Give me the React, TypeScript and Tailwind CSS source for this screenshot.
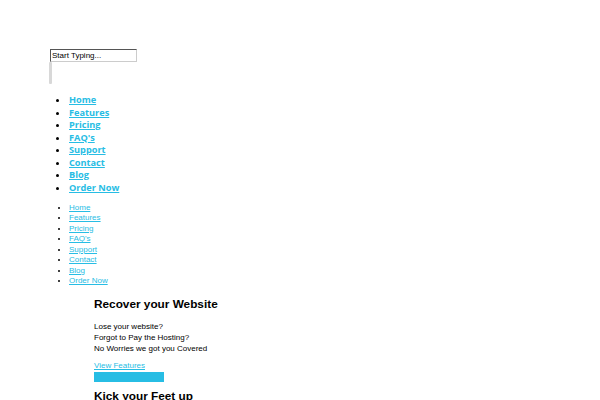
import React from "react";

const bold = ["Home", "Features", "Pricing", "FAQ's", "Support", "Contact", "Blog", "Order Now"];

export default function App() {
  return (
    <div className="min-h-[400px] w-[600px] bg-white pt-[49px] pl-[49px] overflow-hidden" style={{ fontFamily: '"Liberation Sans", Arial, sans-serif' }}>
      <input
        readOnly
        value="Start Typing..."
        className="block ml-[1px] w-[87px] h-[13px] px-[1px] text-[8px] leading-[11px] text-black border border-t-[#555] border-l-[#555] border-r-[#ccc] border-b-[#ccc] outline-none bg-white"
      />
      <div className="w-[3px] h-[22px] bg-[#d8d8d8] rounded-[1px]" />
      <ul
        className="mt-[10px] ml-[13px] pl-[7px] list-disc text-[9.2px] leading-[12.57px] font-bold"
        style={{ fontFamily: '"Open Sans", sans-serif' }}
      >
        {bold.map((t) => (
          <li key={t}>
            <a href="#" className="text-[#27bde4] underline">{t}</a>
          </li>
        ))}
      </ul>
      <ul className="mt-[8px] ml-[13px] pl-[7px] list-disc text-[8px] leading-[10.57px]">
        {bold.map((t) => (
          <li key={t}>
            <a href="#" className="text-[#27bde4] underline">{t}</a>
          </li>
        ))}
      </ul>
      <div className="ml-[45px]">
        <h2 className="mt-[10px] text-[11.8px] leading-[15px] font-bold text-black">Recover your Website</h2>
        <p className="mt-[9px] text-[8px] leading-[11px] text-black">
          Lose your website?<br />Forgot to Pay the Hosting?<br />No Worries we got you Covered
        </p>
        <a href="#" className="block mt-[6px] text-[8px] leading-[11px] text-[#27bde4] underline">View Features</a>
        <div className="mt-[0.5px] w-[70px] h-[10px] bg-[#27bde4]" />
        <h2 className="mt-[7px] text-[11.8px] leading-[15px] font-bold text-black">Kick your Feet up</h2>
      </div>
    </div>
  );
}
